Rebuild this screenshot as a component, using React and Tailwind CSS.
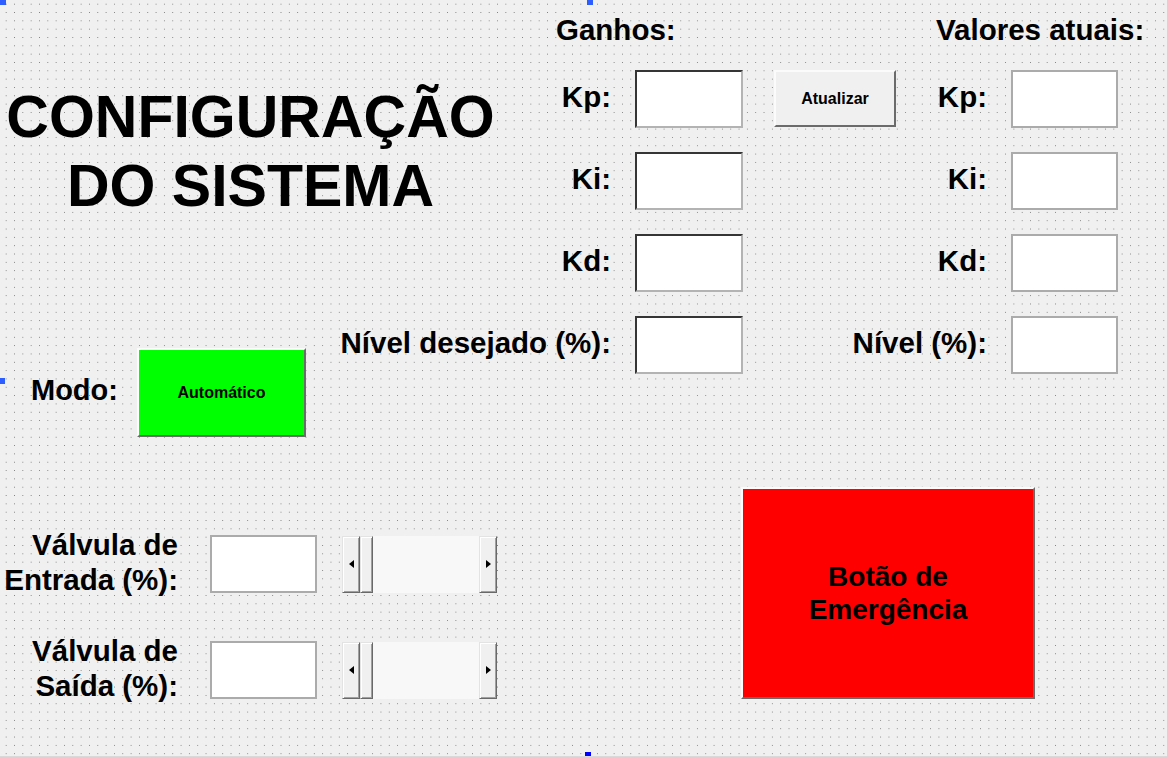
import React from 'react'

const raised =
  'border-2 border-t-[#fbfbfb] border-l-[#fbfbfb] border-r-[#6b6b6b] border-b-[#6b6b6b]'
const sunkenDark =
  'bg-white border-2 border-t-[#353535] border-l-[#353535] border-r-[#b3b3b3] border-b-[#b3b3b3]'
const flatBox = 'bg-white border-2 border-[#ababab]'

function ScrollBtn({ dir }) {
  return (
    <div className="w-[18px] h-full flex items-center justify-center bg-[#f0f0f0] border border-t-[#e3e3e3] border-l-[#e3e3e3] border-r-[#696969] border-b-[#696969] shadow-[inset_1px_1px_0_#ffffff,inset_-1px_-1px_0_#a0a0a0]">
      {dir === 'left' ? (
        <div className="w-0 h-0 border-y-[4px] border-y-transparent border-r-[5px] border-r-black" />
      ) : (
        <div className="w-0 h-0 border-y-[4px] border-y-transparent border-l-[5px] border-l-black" />
      )}
    </div>
  )
}

function ScrollBar() {
  return (
    <div className="ml-[25px] w-[155px] h-[57px] flex">
      <ScrollBtn dir="left" />
      <div className="w-[13px] h-full bg-[#f0f0f0] border border-t-[#e3e3e3] border-l-[#e3e3e3] border-r-[#696969] border-b-[#696969] shadow-[inset_1px_1px_0_#ffffff,inset_-1px_-1px_0_#a0a0a0]" />
      <div className="flex-1 h-full bg-[#f8f8f8]" />
      <ScrollBtn dir="right" />
    </div>
  )
}

function ValveRow({ line1, line2 }) {
  return (
    <div className="h-[58px] flex items-center">
      <div className="w-[178px] pb-[4px] text-right text-[29.5px] leading-[35px] whitespace-nowrap">
        {line1}
        <br />
        {line2}
      </div>
      <div className={`ml-[32px] w-[107px] h-[58px] ${flatBox}`} />
      <ScrollBar />
    </div>
  )
}

const gainRows = [
  { left: 'Kp:', right: 'Kp:', button: true },
  { left: 'Ki:', right: 'Ki:' },
  { left: 'Kd:', right: 'Kd:' },
  { left: 'Nível desejado (%):', right: 'Nível (%):' },
]

export default function App() {
  return (
    <div className="relative w-[1167px] h-[757px] overflow-hidden border-b border-[#d9d9d9] bg-[#f0f0f0] bg-[radial-gradient(circle,#808080_0.5px,transparent_0.9px)] bg-[length:8.33px_8.33px] bg-[position:2px_0px] font-['Liberation_Sans',Arial,sans-serif] font-bold text-black">
      {/* Top area */}
      <div className="flex">
        <div className="w-[520px] shrink-0 flex flex-col">
          <h1 className="mt-[83px] w-[501px] text-center text-[59px] leading-[69px]">
            CONFIGURAÇÃO
            <br />
            DO SISTEMA
          </h1>
          <div className="mt-[127px] flex items-center">
            <span className="ml-[31px] pb-[4px] text-[29px] leading-[33px]">Modo:</span>
            <button
              className={`ml-[19px] w-[169px] h-[89px] bg-[#00ff00] text-[16px] ${raised}`}
            >
              Automático
            </button>
          </div>
        </div>

        {/* Gains grid */}
        <div className="grid grid-cols-[91px_132px_153px_91px_131px] grid-rows-[46px_58px_58px_58px_58px] gap-y-6 text-[29.5px] leading-[33px]">
          <div className="col-span-3 pl-[36px] pt-[13px] whitespace-nowrap">Ganhos:</div>
          <div className="col-span-2 pl-[40px] pt-[13px] whitespace-nowrap">Valores atuais:</div>

          {gainRows.map((r) => (
            <React.Fragment key={r.left}>
              <div className="flex items-center justify-end pb-[5px]">
                <span className="shrink-0 whitespace-nowrap">{r.left}</span>
              </div>
              <div className="flex justify-end">
                <div className={`w-[108px] h-[58px] ${sunkenDark}`} />
              </div>
              <div className="flex justify-end">
                {r.button && (
                  <button
                    className={`w-[122px] h-[57px] bg-[#f0f0f0] text-[16px] leading-none ${raised}`}
                  >
                    Atualizar
                  </button>
                )}
              </div>
              <div className="flex items-center justify-end pb-[5px]">
                <span className="shrink-0 whitespace-nowrap">{r.right}</span>
              </div>
              <div className="flex justify-end">
                <div className={`w-[107px] h-[58px] ${flatBox}`} />
              </div>
            </React.Fragment>
          ))}
        </div>
      </div>

      {/* Bottom area */}
      <div className="flex">
        <div className="mt-[98px] flex flex-col gap-[48px]">
          <ValveRow line1="Válvula de" line2="Entrada (%):" />
          <ValveRow line1="Válvula de" line2="Saída (%):" />
        </div>
        <button
          className={`ml-[244px] mt-[50px] w-[294px] h-[212px] bg-[#ff0000] text-[28px] leading-[33px] ${raised}`}
        >
          Botão de
          <br />
          Emergência
        </button>
      </div>

      {/* designer selection handles */}
      <div className="absolute left-0 top-0 w-[6px] h-[5px] bg-[#2d5cff]" />
      <div className="absolute left-[587px] top-0 w-[6px] h-[5px] bg-[#2d5cff]" />
      <div className="absolute left-0 top-[378px] w-[5px] h-[6px] bg-[#2d5cff]" />
      <div className="absolute left-[585px] top-[752px] w-[6px] h-[5px] bg-[#0000ff]" />
    </div>
  )
}
